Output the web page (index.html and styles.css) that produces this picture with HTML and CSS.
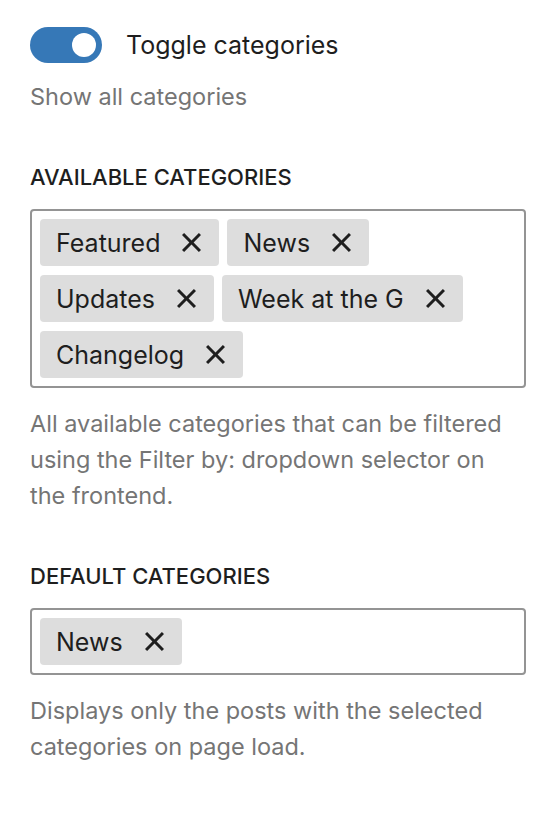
FILE: index.html
```html
<!DOCTYPE html>
<html lang="en">
<head>
<meta charset="utf-8">
<title>Category settings</title>
<link rel="stylesheet" href="styles.css">
</head>
<body>
<div class="panel">
  <div class="toggle-row">
    <span class="toggle is-on"><span class="toggle-thumb"></span></span>
    <span class="toggle-label">Toggle categories</span>
  </div>
  <p class="help help-toggle">Show all categories</p>

  <h2 class="field-label">Available categories</h2>
  <div class="token-field">
    <span class="token"><span class="token-text">Featured</span><svg class="token-x" viewBox="7.227 7.227 9.546 9.546" aria-hidden="true"><path d="M12 13.06l3.712 3.713 1.061-1.06L13.061 12l3.712-3.712-1.06-1.06L12 10.938 8.288 7.227l-1.061 1.06L10.939 12l-3.712 3.712 1.06 1.061L12 13.061z"/></svg></span>
    <span class="token"><span class="token-text">News</span><svg class="token-x" viewBox="7.227 7.227 9.546 9.546" aria-hidden="true"><path d="M12 13.06l3.712 3.713 1.061-1.06L13.061 12l3.712-3.712-1.06-1.06L12 10.938 8.288 7.227l-1.061 1.06L10.939 12l-3.712 3.712 1.06 1.061L12 13.061z"/></svg></span>
    <span class="token"><span class="token-text">Updates</span><svg class="token-x" viewBox="7.227 7.227 9.546 9.546" aria-hidden="true"><path d="M12 13.06l3.712 3.713 1.061-1.06L13.061 12l3.712-3.712-1.06-1.06L12 10.938 8.288 7.227l-1.061 1.06L10.939 12l-3.712 3.712 1.06 1.061L12 13.061z"/></svg></span>
    <span class="token"><span class="token-text">Week at the G</span><svg class="token-x" viewBox="7.227 7.227 9.546 9.546" aria-hidden="true"><path d="M12 13.06l3.712 3.713 1.061-1.06L13.061 12l3.712-3.712-1.06-1.06L12 10.938 8.288 7.227l-1.061 1.06L10.939 12l-3.712 3.712 1.06 1.061L12 13.061z"/></svg></span>
    <span class="token"><span class="token-text">Changelog</span><svg class="token-x" viewBox="7.227 7.227 9.546 9.546" aria-hidden="true"><path d="M12 13.06l3.712 3.713 1.061-1.06L13.061 12l3.712-3.712-1.06-1.06L12 10.938 8.288 7.227l-1.061 1.06L10.939 12l-3.712 3.712 1.06 1.061L12 13.061z"/></svg></span>
  </div>
  <p class="help help-field">All available categories that can be filtered using the Filter by: dropdown selector on the frontend.</p>

  <h2 class="field-label field-label-second">Default categories</h2>
  <div class="token-field">
    <span class="token"><span class="token-text">News</span><svg class="token-x" viewBox="7.227 7.227 9.546 9.546" aria-hidden="true"><path d="M12 13.06l3.712 3.713 1.061-1.06L13.061 12l3.712-3.712-1.06-1.06L12 10.938 8.288 7.227l-1.061 1.06L10.939 12l-3.712 3.712 1.06 1.061L12 13.061z"/></svg></span>
  </div>
  <p class="help help-field">Displays only the posts with the selected categories on page load.</p>
</div>
</body>
</html>
```

FILE: styles.css
```css
html, body {
  margin: 0;
  padding: 0;
  background: #ffffff;
}

body {
  font-family: "Inter", "Noto Sans", "Liberation Sans", sans-serif;
  color: #1e1e1e;
}

.panel {
  padding: 27px 30px 40px 30px;
}

.toggle-row {
  display: flex;
  align-items: center;
  gap: 24px;
  height: 36px;
}

.toggle {
  flex: none;
  width: 72px;
  height: 36px;
  border-radius: 18px;
  background: #3678b7;
  display: flex;
  align-items: center;
  justify-content: flex-end;
  padding: 0 6px;
  box-sizing: border-box;
}

.toggle-thumb {
  width: 24px;
  height: 24px;
  border-radius: 50%;
  background: #ffffff;
}

.toggle-label {
  font-size: 25px;
  line-height: 36px;
}

.help {
  margin: 0;
  font-size: 23.5px;
  line-height: 36px;
  color: #757575;
}

.help-toggle {
  margin-top: 16px;
}

.field-label {
  margin: 46px 0 16px 0;
  font-size: 22px;
  line-height: 32px;
  font-weight: 500;
  text-transform: uppercase;
}

.field-label-second {
  margin-top: 46px;
}

.token-field {
  border: 2px solid #949494;
  border-radius: 4px;
  padding: 8px;
  display: flex;
  flex-wrap: wrap;
  gap: 9px 8px;
}

.token {
  display: flex;
  align-items: center;
  height: 47px;
  background: #dddddd;
  border-radius: 4px;
  padding: 0 18px 0 16px;
  gap: 22px;
  font-size: 25px;
  color: #1e1e1e;
}

.token-x {
  width: 19px;
  height: 19px;
  fill: #1e1e1e;
  flex: none;
}

.help-field {
  margin-top: 18px;
}
```
